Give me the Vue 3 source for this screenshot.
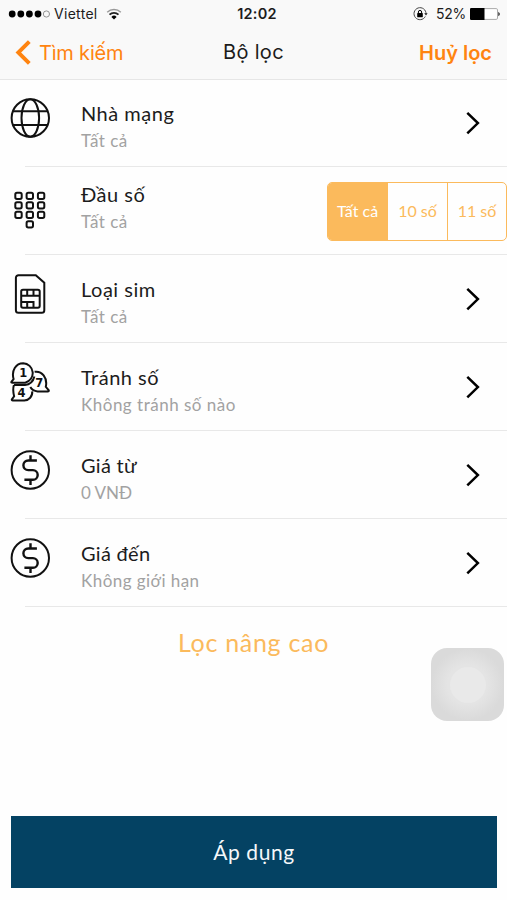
<script setup>
import { ref } from 'vue'

const rows = [
  { id: 'globe', title: 'Nhà mạng', value: 'Tất cả' },
  { id: 'keypad', title: 'Đầu số', value: 'Tất cả' },
  { id: 'sim', title: 'Loại sim', value: 'Tất cả' },
  { id: 'bubbles', title: 'Tránh số', value: 'Không tránh số nào' },
  { id: 'from', title: 'Giá từ', value: '0 VNĐ' },
  { id: 'to', title: 'Giá đến', value: 'Không giới hạn' },
]
const segments = ['Tất cả', '10 số', '11 số']
const active = ref(0)
const keys = [
  [0, 0], [1, 0], [2, 0], [0, 1], [1, 1], [2, 1], [0, 2], [1, 2], [2, 2], [1, 3],
]
</script>

<template>
  <div class="screen">
    <header class="top">
      <div class="status">
        <div class="carrier">
          <svg width="43" height="12" viewBox="0 0 43 12">
            <circle v-for="i in 4" :key="i" :cx="4.2 + (i - 1) * 8.6" cy="6" r="3.4" fill="#000" />
            <circle cx="38.4" cy="6" r="3.1" fill="none" stroke="#888" stroke-width=".9" />
          </svg>
          <span class="name">Viettel</span>
          <svg width="16" height="12" viewBox="0 0 16 12" fill="none">
            <path d="M1.2 4.2a10 10 0 0 1 13.6 0" stroke="#999" stroke-width="1.5" />
            <path d="M3.5 6.7a6.4 6.4 0 0 1 9 0" stroke="#222" stroke-width="1.8" />
            <path d="M8 11.5 5.4 8.9a3.7 3.7 0 0 1 5.2 0z" fill="#000" />
          </svg>
        </div>
        <span class="clock">12:02</span>
        <div class="power">
          <svg width="15" height="14" viewBox="0 0 15 14" fill="none">
            <path d="M12.3 9.5A6 6 0 1 1 13 7" stroke="#444" stroke-width="1" />
            <path d="m11.2 6.2 1.8 2.3 1.6-2.3z" fill="#222" />
            <rect x="4.2" y="6" width="5.6" height="4.2" rx=".4" fill="#000" />
            <path d="M5.4 6.2V5a1.6 1.6 0 0 1 3.2 0v1.2" stroke="#000" />
          </svg>
          <span class="percent">52%</span>
          <svg width="30" height="12" viewBox="0 0 30 12">
            <rect x=".5" y=".6" width="27" height="10.8" rx="1.3" fill="#fff" stroke="#aaa" />
            <path d="M1.2 0H14.5v12H1.2Q0 12 0 10.8V1.2Q0 0 1.2 0" fill="#000" />
            <path d="M28.3 3.7q3 2.3 0 4.6z" fill="#222" />
          </svg>
        </div>
      </div>
      <nav class="nav">
        <button class="back">
          <svg width="16" height="25" viewBox="0 0 16 25" fill="none">
            <path d="M14.3 1.6 3.3 12.5l11 10.9" stroke="#ff8410" stroke-width="3.9" />
          </svg>
          <span class="back-text">Tìm kiếm</span>
        </button>
        <h1 class="heading">Bộ lọc</h1>
        <button class="clear">Huỷ lọc</button>
      </nav>
    </header>

    <main>
      <section v-for="row in rows" :key="row.id" class="row" :class="row.id">
        <svg v-if="row.id === 'globe'" class="icon" viewBox="0 0 40 40">
          <circle cx="20.3" cy="20" r="18.7" />
          <ellipse cx="20.3" cy="20" rx="8.8" ry="18.7" />
          <path d="M3 13.2h34.6M3 26.9h34.6" />
        </svg>
        <svg v-else-if="row.id === 'keypad'" class="icon" viewBox="0 0 40 40">
          <rect
            v-for="(k, i) in keys" :key="i" :x="5.3 + k[0] * 11.3" :y="2.7 + k[1] * 9.5"
            width="6.4" height="6.3" rx="1.7" />
        </svg>
        <svg v-else-if="row.id === 'sim'" class="icon" viewBox="0 0 40 40">
          <path d="M8.4 1.3h17.4l8.5 7.5v27.4a2.5 2.5 0 0 1-2.5 2.5H8.4a2.5 2.5 0 0 1-2.5-2.5V3.8a2.5 2.5 0 0 1 2.5-2.5z" />
          <rect x="11.2" y="15.8" width="18.5" height="18" rx="1.8" />
          <path d="M11.2 21.7h18.5M17.2 16v5.7M23.5 16v5.7M11.2 28h12.3v5.6M17.2 28v5.6" />
        </svg>
        <svg v-else-if="row.id === 'bubbles'" class="icon" viewBox="0 0 40 40">
          <path d="M1.4 19.9 3.6 17C1.2 8.5 5.8 1.2 13.2 1.2a9.9 9.9 0 0 1 2 19.5H2.4q-1.4 0-1-.8z" />
          <path d="M24.6 9.8c7.2-1.2 13.2 6 11.2 15l2.8 3.3q.7 1.2-1 1.3h-10c-4.2-.3-6-2-7.3-4.3" />
          <path d="M3.9 23c-1.2 4-.8 7.3.2 11.3l-2.2 3q-.6 1 1 1.1h11.2a8 8 0 0 0 8.1-9" />
          <path d="M4 23h11c4.8-.2 8.2-3.8 9.4-8.4" />
          <text x="13.3" y="14.8">1</text>
          <text x="29.2" y="25.2">7</text>
          <text x="11.4" y="35.4">4</text>
        </svg>
        <svg v-else class="icon" viewBox="0 0 40 40">
          <circle cx="20.3" cy="20" r="18.7" />
          <path class="dollar" d="M20.5 5.2v5M20.5 30v5M26.9 10.5h-8.7a4.8 4.8 0 0 0 0 9.6h4.7a4.7 4.7 0 0 1 0 9.6h-8.5" />
        </svg>

        <div class="label">
          <span class="title">{{ row.title }}</span>
          <span class="value">{{ row.value }}</span>
        </div>

        <div v-if="row.id === 'keypad'" class="segments">
          <button
            v-for="(s, i) in segments" :key="s" class="segment" :class="{ on: i === active }"
            @click="active = i">{{ s }}</button>
        </div>
        <svg v-else class="chevron" width="14" height="24" viewBox="0 0 14 24" fill="none">
          <path d="M1.3 1.8 11.9 12.1 1.3 22.4" stroke="#000" stroke-width="2.5" />
        </svg>
      </section>
    </main>

    <button class="advanced">Lọc nâng cao</button>
    <button class="apply">Áp dụng</button>
    <div class="assistive"><span class="dot"></span></div>
  </div>
</template>

<style>
body { background: #fefefe; }
</style>

<style scoped>
.screen {
  position: relative;
  display: flex;
  flex-direction: column;
  box-sizing: border-box;
  width: 507px;
  height: 900px;
  overflow: hidden;
  background: #fefefe;
  color: #1c1c1c;
  font-family: Lato, "Open Sans", sans-serif;
}
button {
  margin: 0;
  padding: 0;
  border: 0;
  background: none;
  font: inherit;
  color: inherit;
}
svg { display: block; flex: none; }
.top {
  box-sizing: border-box;
  height: 80px;
  border-bottom: 1px solid #e6e6e6;
  background: #f9f9f9;
  font-family: Inter, Roboto, sans-serif;
}
.status, .nav {
  display: grid;
  grid-template-columns: 1fr auto 1fr;
  align-items: center;
}
.status { height: 27px; padding: 0 7px 0 8px; font-size: 14px; }
.carrier, .power { display: flex; align-items: center; }
.name { margin: 0 8px 0 3px; font-size: 14px; letter-spacing: .3px; }
.clock { margin-left: 6px; font-size: 14.5px; font-weight: 600; letter-spacing: .25px; }
.power { justify-content: flex-end; }
.percent { margin: 0 4px 0 8px; font-size: 14px; letter-spacing: -.3px; }
.nav { height: 51px; padding: 0 15px; }
.back { display: flex; align-items: center; gap: 8px; color: #ff8410; }
.back-text { font-size: 20px; letter-spacing: -.2px; }
.heading { margin: -1px 0 0; font-size: 20px; font-weight: 400; letter-spacing: .3px; }
.clear { justify-self: end; color: #ff8410; font-size: 20px; font-weight: 600; }

.row {
  position: relative;
  display: flex;
  align-items: flex-start;
  box-sizing: border-box;
  height: 88px;
  padding: 19px 27px 0 10px;
}
.row::after {
  content: "";
  position: absolute;
  left: 25px;
  right: 0;
  bottom: 0;
  height: 1px;
  background: #e8e8e8;
}
.globe { height: 87px; padding-top: 18px; }
.keypad { padding: 15px 0 0 10px; }
.icon {
  width: 40px;
  height: 40px;
  fill: none;
  stroke: #111;
  stroke-width: 2;
}
.keypad .icon { margin-top: 8px; }
.icon text {
  fill: #111;
  stroke: none;
  font: 700 11.5px "DejaVu Sans", sans-serif;
  text-anchor: middle;
}
.dollar { stroke-width: 2.4; stroke-linejoin: round; }
.label { display: flex; flex: 1; flex-direction: column; margin-left: 31px; }
.title { margin-top: 2px; font-size: 20px; line-height: 26px; letter-spacing: .5px; }
.value { margin-top: 1px; font-size: 17px; line-height: 28px; letter-spacing: .5px; color: #a2a2a2; }
.keypad .title { margin-top: -1px; }
.from .title, .to .title { letter-spacing: .3px; }
.from .value { letter-spacing: 0; }
.to .value { letter-spacing: .45px; }
.chevron { margin-top: 13px; }
.segments {
  display: grid;
  grid-template-columns: 59px 60px 59px;
  box-sizing: border-box;
  height: 59px;
  border: 1px solid #fbba5c;
  border-radius: 5px;
  overflow: hidden;
  color: #fbba5c;
  font-size: 16px;
  letter-spacing: .3px;
}
.segment { padding-bottom: 2px; }
.segment + .segment { border-left: 1px solid #fbba5c; }
.segment.on { background: #fbba5c; color: #fff; }
.advanced {
  align-self: center;
  margin-top: 17px;
  color: #fbba5c;
  font-size: 25px;
  line-height: 36px;
  letter-spacing: .7px;
}
.apply {
  height: 72px;
  margin: auto 10px 12px 11px;
  padding-bottom: 2px;
  background: #044263;
  color: #f5f8fa;
  font-size: 21px;
  letter-spacing: .6px;
}
.assistive {
  position: absolute;
  left: 431px;
  top: 648px;
  display: grid;
  place-items: center;
  width: 73px;
  height: 73px;
  border-radius: 16px;
  background: radial-gradient(circle, #e4e4e4 20px, #dadada 36px);
}
.dot { width: 36px; height: 36px; border-radius: 50%; background: #e9e9e9; }
</style>
